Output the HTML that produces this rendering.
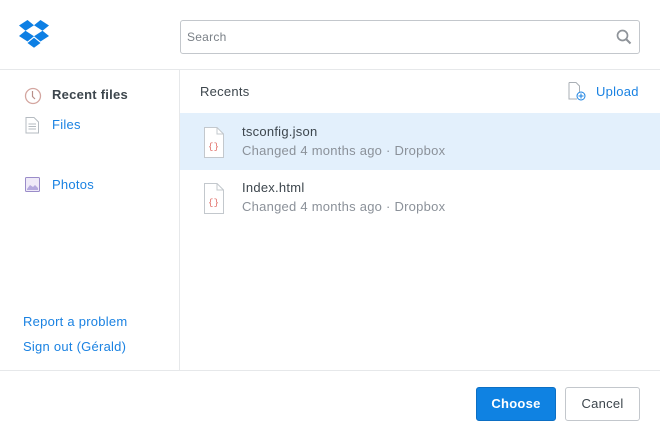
<!DOCTYPE html>
<html><head><style>
*{margin:0;padding:0;box-sizing:border-box}
body{width:660px;height:440px;background:#fff;font-family:"Liberation Sans",sans-serif;font-size:13px;color:#3d464d;position:relative;overflow:hidden;letter-spacing:0.25px}
.a{position:absolute}
.blue{color:#1a82e2}
.grey{color:#8b9199}
</style></head><body>
<svg class="a" style="left:19px;top:20px" width="30" height="28" viewBox="0 0 30 28">
<g fill="#0d7fe4">
<polygon points="0,5.5 8.5,0 15,5.2 6.5,10.7"/>
<polygon points="15,5.2 21.5,0 30,5.5 23.5,10.7"/>
<polygon points="0,16 6.5,10.7 15,16.2 8.5,21.5"/>
<polygon points="23.5,10.7 30,16 21.5,21.5 15,16.2"/>
<polygon points="8.5,23 15,17.7 21.5,23 15,27.8"/>
</g></svg>
<div class="a" style="left:180px;top:20px;width:460px;height:34px;border:1px solid #c3c7cc;border-radius:3px"></div>
<div class="a grey" style="left:187px;top:30px;font-size:12px;color:#7a8087">Search</div>
<svg class="a" style="left:616px;top:29px" width="16" height="16" viewBox="0 0 16 16"><circle cx="6.5" cy="6.5" r="5" fill="none" stroke="#8e9399" stroke-width="1.7"/><line x1="10" y1="10" x2="14.5" y2="14.5" stroke="#8e9399" stroke-width="2"/></svg>
<div class="a" style="left:0;top:69px;width:660px;height:1px;background:#e6e8ea"></div>
<div class="a" style="left:179px;top:70px;width:1px;height:300px;background:#e6e8ea"></div>
<div class="a" style="left:0;top:370px;width:660px;height:1px;background:#e6e8ea"></div>
<svg class="a" style="left:24px;top:87px" width="18" height="18"><circle cx="9" cy="9" r="7.5" fill="none" stroke="#d4a6a0" stroke-width="1.3"/><path d="M8.5 4V9.5L11 12" fill="none" stroke="#b88f89" stroke-width="1.2"/></svg>
<div class="a" style="left:52px;top:87px;font-weight:bold;color:#3d464d">Recent files</div>
<svg class="a" style="left:25px;top:117px" width="15" height="17"><path d="M1 .5H9L13.5 5V16H1Z" fill="none" stroke="#b5bbc1"/><path d="M3.5 7H11M3.5 9.5H11M3.5 12H11" stroke="#b5bbc1"/></svg>
<div class="a blue" style="left:52px;top:117px">Files</div>
<svg class="a" style="left:25px;top:177px" width="15" height="15"><rect x=".5" y=".5" width="14" height="14" rx="1" fill="#efeaf8" stroke="#9a8cc9"/><path d="M2 12L5 8L8 10L10 8L13 11V13H2Z" fill="#b5a9de"/></svg>
<div class="a blue" style="left:52px;top:177px">Photos</div>
<div class="a blue" style="left:23px;top:314px">Report a problem</div>
<div class="a blue" style="left:23px;top:339px">Sign out (Gérald)</div>
<div class="a" style="left:200px;top:84px">Recents</div>
<svg class="a" style="left:568px;top:82px" width="18" height="19"><path d="M1 .5H8L11.5 4V10" fill="none" stroke="#a9afb5"/><path d="M1 .5V17H9" fill="none" stroke="#a9afb5"/><circle cx="13" cy="14" r="4" fill="#fff" stroke="#1a82e2"/><path d="M13 11.5V16.5M10.5 14H15.5" stroke="#1a82e2"/></svg>
<div class="a blue" style="left:596px;top:84px">Upload</div>
<div class="a" style="left:180px;top:113px;width:480px;height:57px;background:#e3f0fc"></div>
<svg class="a" style="left:204px;top:127px" width="20" height="31"><path d="M.5 .5H13L19.5 7V30.5H.5Z" fill="#fff" stroke="#c3c8cd"/><path d="M13 .5V7H19.5" fill="none" stroke="#c3c8cd"/><text x="4" y="22" font-size="9" fill="#e06a63" font-family="Liberation Mono">{}</text></svg>
<div class="a" style="left:242px;top:124px">tsconfig.json</div>
<div class="a grey" style="left:242px;top:143px">Changed 4 months ago · Dropbox</div>
<svg class="a" style="left:204px;top:183px" width="20" height="31"><path d="M.5 .5H13L19.5 7V30.5H.5Z" fill="#fff" stroke="#c3c8cd"/><path d="M13 .5V7H19.5" fill="none" stroke="#c3c8cd"/><text x="4" y="22" font-size="9" fill="#e06a63" font-family="Liberation Mono">{}</text></svg>
<div class="a" style="left:242px;top:180px">Index.html</div>
<div class="a grey" style="left:242px;top:199px">Changed 4 months ago · Dropbox</div>
<div class="a" style="left:476px;top:387px;width:80px;height:34px;background:#0f82e2;border:1px solid #0c6fc4;border-radius:3px;color:#fff;font-weight:bold;text-align:center;line-height:32px">Choose</div>
<div class="a" style="left:565px;top:387px;width:75px;height:34px;border:1px solid #c3c7cc;border-radius:3px;text-align:center;line-height:32px">Cancel</div>
</body></html>
